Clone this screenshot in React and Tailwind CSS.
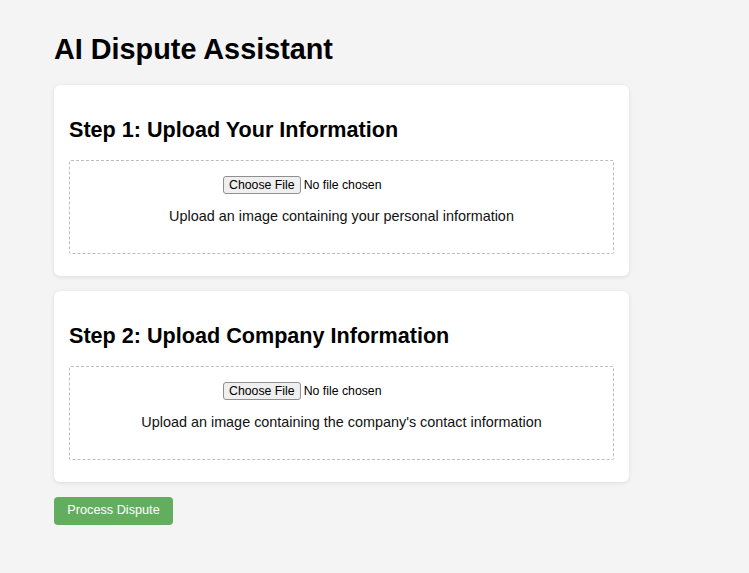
export default function App() {
  return (
    <div
      className="min-h-[573px] bg-[#f4f4f4] text-black"
      style={{ fontFamily: '"Liberation Sans", Arial, sans-serif' }}
    >
      <div className="w-[575px] ml-[54px] pt-[33px] pb-10">
        <h1 className="text-[28.8px] font-bold leading-[32px] mb-[20px]">
          AI Dispute Assistant
        </h1>
        <StepCard
          title="Step 1: Upload Your Information"
          hint="Upload an image containing your personal information"
        />
        <div className="h-[15px]" />
        <StepCard
          title="Step 2: Upload Company Information"
          hint="Upload an image containing the company's contact information"
        />
        <button className="mt-[15px] w-[119px] h-[28px] rounded-[4px] bg-[#62ae5e] text-white text-[12.7px] flex items-center justify-center">
          Process Dispute
        </button>
      </div>
    </div>
  );
}

function StepCard({ title, hint }) {
  return (
    <div className="bg-white rounded-[6px] shadow-[0_1px_4px_rgba(0,0,0,0.1)] px-[15px] pt-[32px] pb-[22px]">
      <h2 className="text-[21.6px] font-bold leading-[26px] mb-[17px]">
        {title}
      </h2>
      <div className="border border-dashed border-[#bdbdbd] rounded-[2px] pt-[15px] pb-[28px] flex flex-col items-center">
        <FileInput />
        <p className="mt-[14px] text-[14.4px] leading-[17px] text-[#111]">
          {hint}
        </p>
      </div>
    </div>
  );
}

function FileInput() {
  return (
    <div className="w-[237px] flex items-center text-[12.3px] leading-none">
      <span className="h-[18px] px-[5px] flex items-center border border-[#8f8f8f] rounded-[3px] bg-[#efefef] text-black">
        Choose File
      </span>
      <span className="ml-[3px] text-black">No file chosen</span>
    </div>
  );
}
